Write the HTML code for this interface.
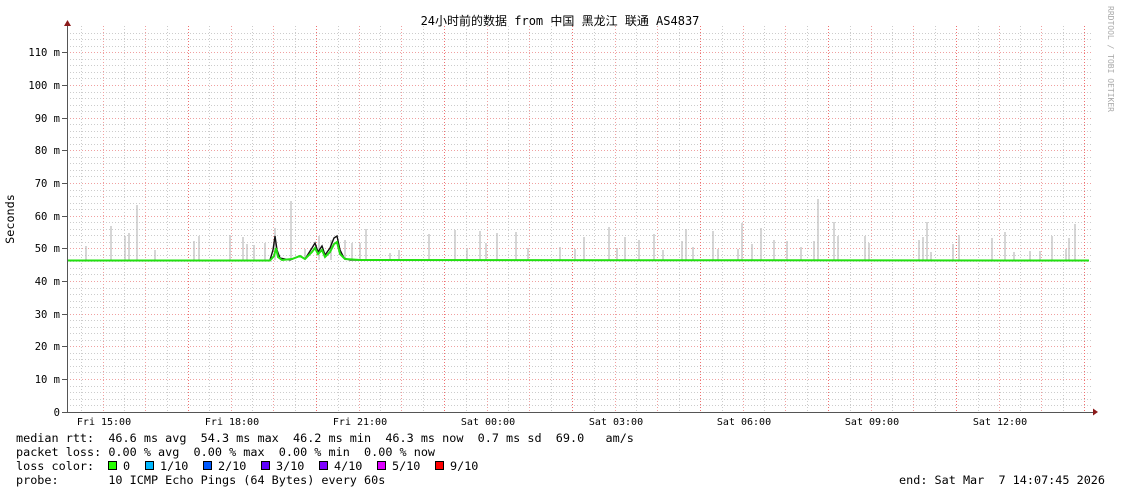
<!DOCTYPE html>
<html><head><meta charset="utf-8"><style>
body{margin:0;background:#fff;width:1121px;height:494px;overflow:hidden}
svg{display:block}
text{font-family:"DejaVu Sans Mono","Liberation Mono","Noto Sans CJK SC",monospace;font-size:11.8px;fill:#000;white-space:pre}
text.y{font-size:10.5px}
text.x{font-size:10px}
text.t{font-size:12px}
text.r{font-size:8px;fill:#aaa}
</style></head><body>
<svg width="1121" height="494" viewBox="0 0 1121 494">
<rect width="1121" height="494" fill="#fff"/>
<g stroke="#ccc" stroke-width="1" stroke-dasharray="1,2" shape-rendering="crispEdges">
<path d="M67 405.5H1093M67 399.5H1093M67 392.5H1093M67 386.5H1093M67 372.5H1093M67 366.5H1093M67 359.5H1093M67 353.5H1093M67 340.5H1093M67 333.5H1093M67 327.5H1093M67 320.5H1093M67 307.5H1093M67 301.5H1093M67 294.5H1093M67 288.5H1093M67 274.5H1093M67 268.5H1093M67 261.5H1093M67 255.5H1093M67 242.5H1093M67 235.5H1093M67 229.5H1093M67 222.5H1093M67 209.5H1093M67 203.5H1093M67 196.5H1093M67 190.5H1093M67 176.5H1093M67 170.5H1093M67 163.5H1093M67 157.5H1093M67 144.5H1093M67 137.5H1093M67 131.5H1093M67 124.5H1093M67 111.5H1093M67 105.5H1093M67 98.5H1093M67 92.5H1093M67 78.5H1093M67 72.5H1093M67 65.5H1093M67 59.5H1093M67 46.5H1093M67 39.5H1093M67 33.5H1093"/>
<path d="M81.5 26V412M124.5 26V412M167.5 26V412M209.5 26V412M252.5 26V412M295.5 26V412M338.5 26V412M380.5 26V412M423.5 26V412M466.5 26V412M508.5 26V412M551.5 26V412M594.5 26V412M636.5 26V412M679.5 26V412M722.5 26V412M764.5 26V412M807.5 26V412M850.5 26V412M892.5 26V412M935.5 26V412M978.5 26V412M1020.5 26V412M1063.5 26V412"/>
</g>
<g stroke="#f0a0a0" stroke-width="1" stroke-dasharray="1,2" shape-rendering="crispEdges">
<path d="M67 379.5H1093M67 346.5H1093M67 314.5H1093M67 281.5H1093M67 248.5H1093M67 216.5H1093M67 183.5H1093M67 150.5H1093M67 118.5H1093M67 85.5H1093M67 52.5H1093"/>
<path d="M103.5 26V412M145.5 26V412M231.5 26V412M273.5 26V412M359.5 26V412M401.5 26V412M487.5 26V412M529.5 26V412M615.5 26V412M657.5 26V412M743.5 26V412M785.5 26V412M871.5 26V412M913.5 26V412M999.5 26V412M1041.5 26V412"/>
</g>
<g stroke="#f07070" stroke-width="1" stroke-dasharray="1,2" shape-rendering="crispEdges">
<path d="M188.5 26V412M316.5 26V412M444.5 26V412M572.5 26V412M700.5 26V412M828.5 26V412M956.5 26V412M1084.5 26V412"/>
</g>
<g stroke="#bbb" stroke-width="1.2">
<path d="M86 260V246M111 260V226M125 260V236M129 260V233M137 260V205M155 260V250M194 260V241M199 260V236M230 260V235M243 260V237M247 260V244M254 260V245M265 260V243M275 260V228M291 260V201M305 260V249M319 260V236M331 260V240M345 260V240M352 260V243M360 260V243M366 260V229M390 260V253M399 260V250M429 260V234M455 260V230M467 260V248M480 260V231M486 260V243M497 260V233M516 260V232M528 260V248M560 260V247M575 260V249M584 260V237M609 260V227M617 260V248M625 260V237M639 260V240M654 260V234M663 260V250M682 260V241M686 260V229M693 260V247M713 260V231M718 260V249M738 260V249M742 260V223M752 260V244M761 260V228M774 260V240M787 260V241M801 260V247M814 260V241M818 260V199M834 260V222M838 260V236M865 260V236M869 260V243M919 260V240M923 260V237M927 260V222M931 260V252M953 260V244M959 260V235M992 260V238M1005 260V232M1014 260V252M1030 260V251M1040 260V251M1052 260V236M1066 260V249M1069 260V238M1075 260V224"/>
</g>
<path d="M270 260L273 250L275 236L277 250L280 258L290 260L300 256L305 259L312 248L315 243L318 252L322 246L325 255L330 248L334 238L337 236L340 250L344 258L350 260L370 260" fill="none" stroke="#111" stroke-width="1.4"/>
<path d="M67 260.5H270L274 256L276 248L278 257L282 260L292 259L300 256L305 259L312 252L315 248L318 254L322 250L325 257L330 252L334 244L337 242L340 254L345 259L360 260L1089 260.5" fill="none" stroke="#22e010" stroke-width="2"/>
<g stroke="#555" stroke-width="1" shape-rendering="crispEdges">
<path d="M67.5 24V413M62 412.5H1093"/>
<path d="M62 379.5H67M62 346.5H67M62 314.5H67M62 281.5H67M62 248.5H67M62 216.5H67M62 183.5H67M62 150.5H67M62 118.5H67M62 85.5H67M62 52.5H67"/>
</g>
<path d="M64 26L67.5 20L71 26Z" fill="#8b1a1a"/>
<path d="M1093 408.5L1098 412L1093 415.5Z" fill="#8b1a1a"/>
<g text-anchor="end">
<text class="y" x="60" y="416">0</text><text class="y" x="60" y="383">10 m</text><text class="y" x="60" y="350">20 m</text><text class="y" x="60" y="318">30 m</text><text class="y" x="60" y="285">40 m</text><text class="y" x="60" y="252">50 m</text><text class="y" x="60" y="220">60 m</text><text class="y" x="60" y="187">70 m</text><text class="y" x="60" y="154">80 m</text><text class="y" x="60" y="122">90 m</text><text class="y" x="60" y="89">100 m</text><text class="y" x="60" y="56">110 m</text>
</g>
<g text-anchor="middle">
<text class="x" x="104" y="425">Fri 15:00</text><text class="x" x="232" y="425">Fri 18:00</text><text class="x" x="360" y="425">Fri 21:00</text><text class="x" x="488" y="425">Sat 00:00</text><text class="x" x="616" y="425">Sat 03:00</text><text class="x" x="744" y="425">Sat 06:00</text><text class="x" x="872" y="425">Sat 09:00</text><text class="x" x="1000" y="425">Sat 12:00</text>
</g>
<text class="t" x="560" y="25" text-anchor="middle">24小时前的数据 from 中国 黑龙江 联通 AS4837</text>
<text transform="translate(14,219) rotate(-90)" text-anchor="middle">Seconds</text>
<text class="r" transform="translate(1108,6) rotate(90)">RRDTOOL / TOBI OETIKER</text>
<text x="16" y="442">median rtt:  46.6 ms avg  54.3 ms max  46.2 ms min  46.3 ms now  0.7 ms sd  69.0   am/s</text>
<text x="16" y="456">packet loss: 0.00 % avg  0.00 % max  0.00 % min  0.00 % now</text>
<text x="16" y="470">loss color:</text>
<text x="123" y="470">0</text><text x="160" y="470">1/10</text><text x="218" y="470">2/10</text><text x="276" y="470">3/10</text><text x="334" y="470">4/10</text><text x="392" y="470">5/10</text><text x="450" y="470">9/10</text>
<text x="16" y="484">probe:       10 ICMP Echo Pings (64 Bytes) every 60s</text>
<text x="1105" y="484" text-anchor="end">end: Sat Mar  7 14:07:45 2026</text>
<g stroke="#000" stroke-width="1" shape-rendering="crispEdges">
<rect x="108.5" y="461.5" width="8" height="8" fill="#26ff00"/>
<rect x="145.5" y="461.5" width="8" height="8" fill="#00b8ff"/>
<rect x="203.5" y="461.5" width="8" height="8" fill="#0059ff"/>
<rect x="261.5" y="461.5" width="8" height="8" fill="#5e00ff"/>
<rect x="319.5" y="461.5" width="8" height="8" fill="#7e00ff"/>
<rect x="377.5" y="461.5" width="8" height="8" fill="#dd00ff"/>
<rect x="435.5" y="461.5" width="8" height="8" fill="#ff0000"/>
</g>
</svg>
</body></html>
